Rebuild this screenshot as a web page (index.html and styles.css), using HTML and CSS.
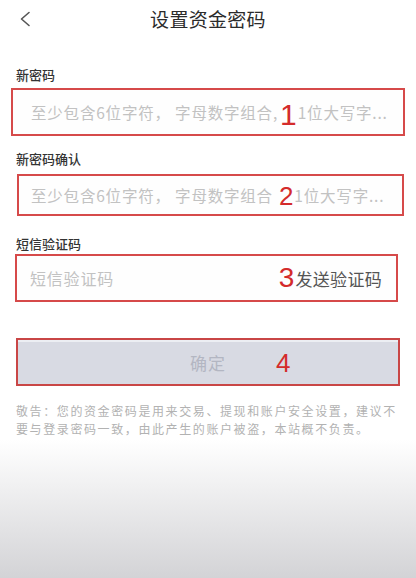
FILE: index.html
```html
<!DOCTYPE html>
<html lang="zh-CN">
<head>
<meta charset="utf-8">
<title>设置资金密码</title>
<link rel="stylesheet" href="styles.css">
</head>
<body>
<div class="page">
  <header class="topbar">
    <div class="back">
      <svg width="12" height="16" viewBox="0 0 12 16"><path d="M10 1.5 L2.5 8 L10 14.5" fill="none" stroke="#555" stroke-width="1.6" stroke-linecap="round" stroke-linejoin="round"/></svg>
    </div>
    <div class="title">设置资金密码</div>
    <div></div>
  </header>

  <div class="label label-1">新密码</div>
  <div class="field field-1">
    <span class="ph">至少包含6位字符，&nbsp;字母数字组合,</span><span class="mark mark-1">1</span><span class="ph">1位大写字...</span>
  </div>

  <div class="label label-2">新密码确认</div>
  <div class="field field-2">
    <span class="ph">至少包含6位字符，&nbsp;字母数字组合</span><span class="mark mark-2">2</span><span class="ph">1位大写字...</span>
  </div>

  <div class="label label-3">短信验证码</div>
  <div class="field field-3">
    <span class="ph ph-sms">短信验证码</span>
    <span class="send"><span class="mark mark-3">3</span>发送验证码</span>
  </div>

  <div class="confirm">
    <span class="confirm-text">确定</span>
    <span class="mark mark-4">4</span>
  </div>

  <p class="warning">敬告：您的资金密码是用来交易、提现和账户安全设置，建议不<br>要与登录密码一致，由此产生的账户被盗，本站概不负责。</p>
</div>
</body>
</html>
```

FILE: styles.css
```css
html, body {
  margin: 0;
  padding: 0;
}
body {
  width: 416px;
  height: 578px;
  overflow: hidden;
  font-family: "Noto Sans CJK SC", "Noto Sans", sans-serif;
  background: linear-gradient(to bottom, #ffffff 0px, #ffffff 440px, #d3d3d6 578px);
  color: #333;
}
.page {
  display: flex;
  flex-direction: column;
}
.topbar {
  height: 38px;
  display: grid;
  grid-template-columns: 1fr auto 1fr;
  align-items: center;
}
.back {
  padding-left: 19px;
  display: flex;
  align-items: center;
}
.title {
  font-size: 19px;
  line-height: 38px;
  color: #2b2b2b;
  letter-spacing: 0.3px;
}
.label {
  padding-left: 16px;
  font-size: 13px;
  line-height: 16px;
  font-weight: 500;
  color: #333;
}
.label-1 { margin-top: 29px; }
.label-2 { margin-top: 15px; }
.label-3 { margin-top: 20px; }

.field {
  box-sizing: border-box;
  border: 2px solid #d64a4a;
  background: #fefefe;
  display: flex;
  align-items: center;
  white-space: nowrap;
  overflow: hidden;
}
.field-1 {
  margin: 5px 11px 0 11px;
  height: 48px;
  padding-left: 18px;
}
.field-2 {
  margin: 7px 12px 0 17px;
  height: 42px;
  padding-left: 12px;
}
.field-3 {
  margin: 2px 18px 0 15px;
  height: 48px;
  padding-left: 13px;
  padding-right: 14px;
  justify-content: space-between;
}
.ph {
  font-size: 15.5px;
  color: #c2c2c2;
  letter-spacing: 0.8px;
}
.ph-sms {
  font-size: 16px;
}
.send {
  display: flex;
  align-items: center;
  font-size: 17px;
  color: #555;
  letter-spacing: 0.3px;
}
.mark {
  font-family: "Liberation Sans", Arial, sans-serif;
  color: #d42b2b;
  line-height: 1;
}
.mark-1 { font-size: 30px; margin: 6px 1px 0 2px; }
.mark-2 { font-size: 26px; margin: 2px 1px 0 6px; }
.mark-3 { font-size: 28px; margin-right: 1px; }

.confirm {
  position: relative;
  box-sizing: border-box;
  margin: 36px 16px 0 16px;
  height: 48px;
  border: 2px solid #c94646;
  background: #d8dae3;
  box-shadow: inset 0 2px 0 #eceef3;
  display: flex;
  align-items: center;
  justify-content: center;
}
.confirm-text {
  font-size: 17px;
  color: #b3b6c2;
  letter-spacing: 1px;
}
.mark-4 {
  position: absolute;
  left: 258px;
  top: 10px;
  font-size: 26px;
}
.warning {
  margin: 16px 0 0 0;
  padding: 0 10px 0 16px;
  font-size: 12px;
  line-height: 17.5px;
  color: #b2b2b2;
  letter-spacing: 1.6px;
  white-space: nowrap;
}
```
